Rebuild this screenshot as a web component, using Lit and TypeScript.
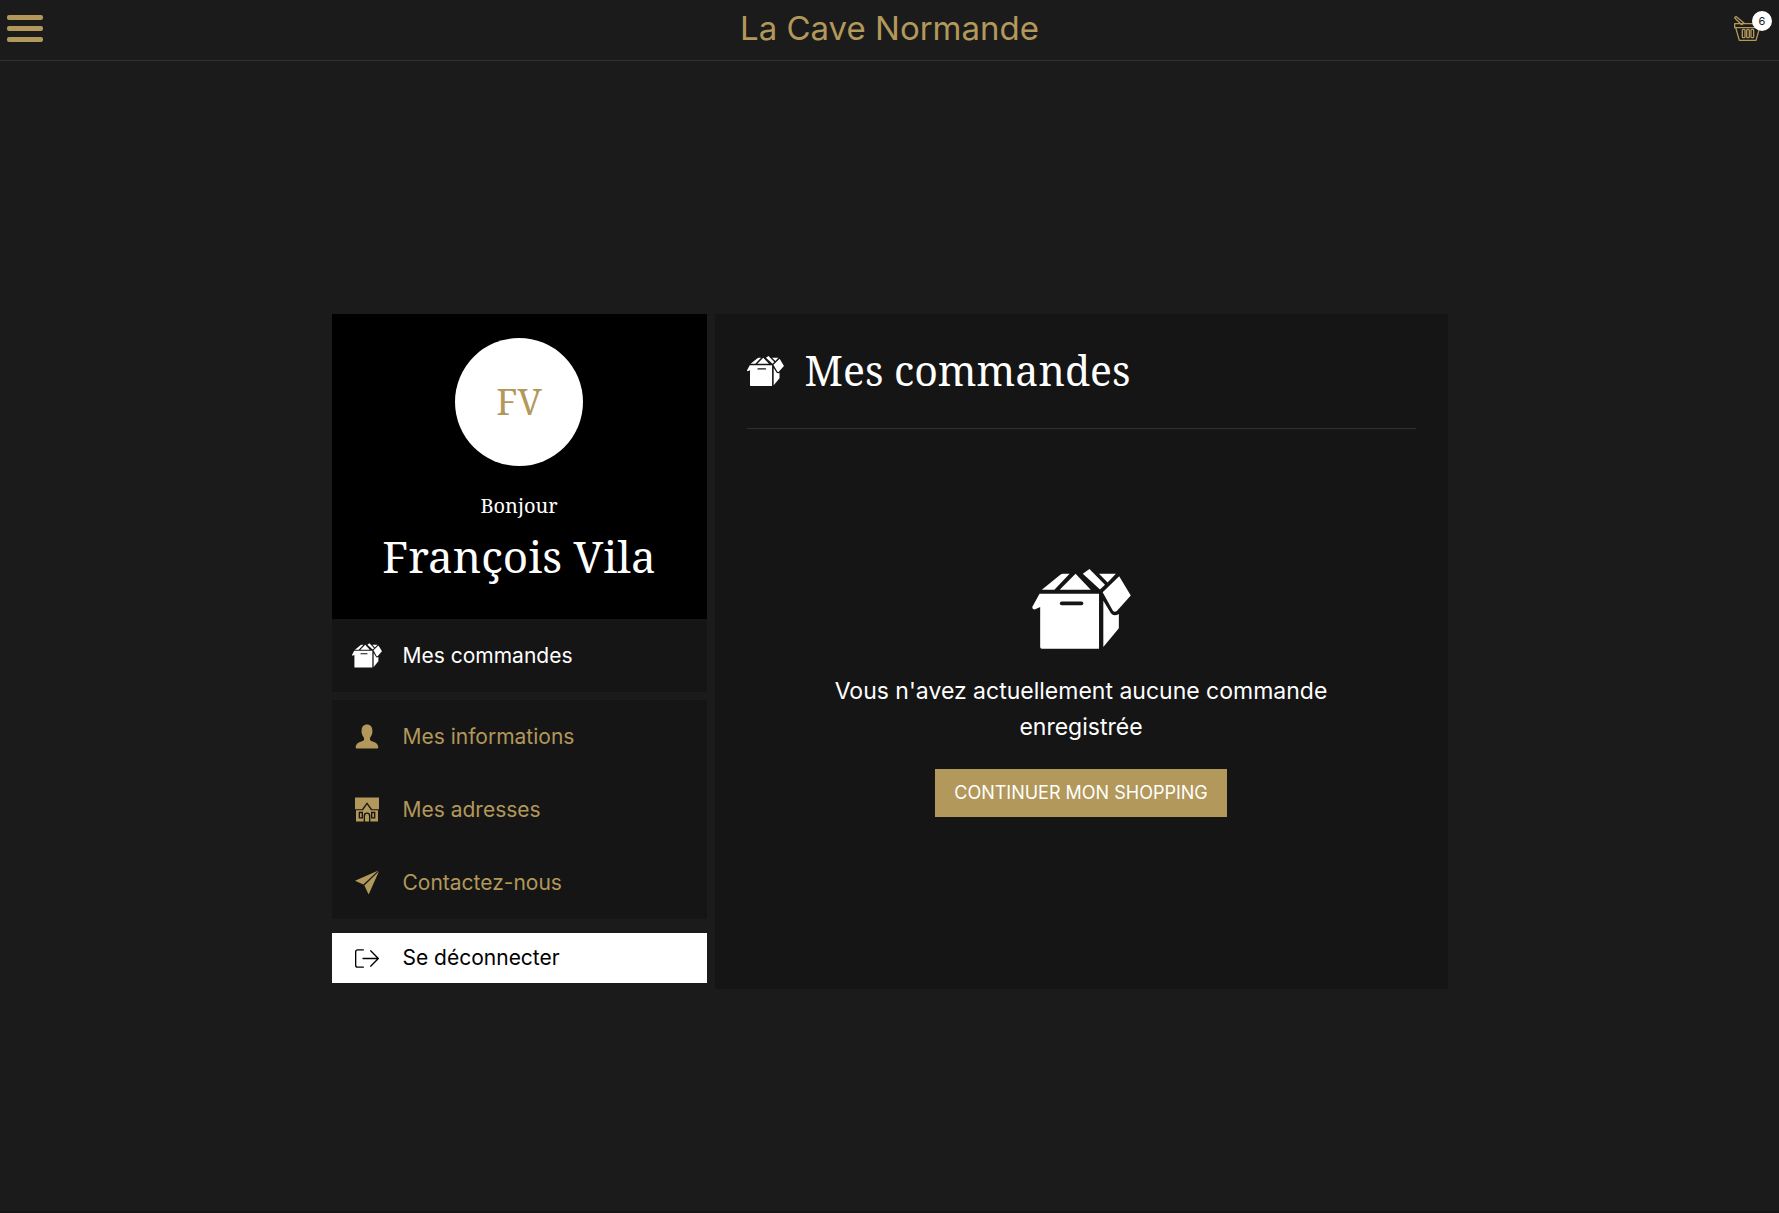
import { LitElement, html, css, TemplateResult } from "lit";
import { customElement } from "lit/decorators.js";

const boxIcon = html`<svg class="box" viewBox="66 56 298 242" aria-hidden="true">
  <g fill="currentColor">
    <path d="M95 119L150 74Q154 70 160 70H179L133 119Z" />
    <path d="M149 119L197 70L243 119Z" />
    <path d="M219 70L239 56L286 104L271 118Z" />
    <path d="M268 70H319L294 97Z" />
    <path d="M329 78L364 136L322 183Q315 188 310 182L279 126Z" />
    <path d="M88 131H268V297H95Q90 297 90 292V171L75 178Q66 180 66 171Z" />
    <path d="M281 152L304 190Q313 201 328 192V235L281 292Z" />
  </g>
  <path class="slot" d="M155 160H215" />
</svg>`;

const personIcon = html`<svg class="glyph" viewBox="0 0 72 74" aria-hidden="true">
  <path fill="currentColor" d="M36 1C46 1 52 8 52 18C52 21 53 22 52 26C51 30 50 34 47 38C44 42 44 48 47 50C53 53 70 55 70 70Q70 73 67 73H5Q2 73 2 70C2 55 19 53 25 50C28 48 28 42 25 38C22 34 21 30 20 26C19 22 20 21 20 18C20 8 26 1 36 1Z" />
</svg>`;

const houseIcon = html`<svg class="glyph" viewBox="0 0 72 74" aria-hidden="true">
  <path fill="currentColor" d="M0 1H72V36H51L36 15L21 36H0Z" />
  <path fill="currentColor" fill-rule="evenodd" d="M3 39H24L36 22L48 39H69V73H46V56Q46 46 36 46Q26 46 26 56V73H3ZM11 44V64H24V44ZM48 44V64H61V44Z" />
  <path fill="currentColor" d="M15 48H20V60H15ZM52 48H57V60H52ZM30 73V57Q30 50 36 50Q42 50 42 57V73Z" />
</svg>`;

const planeIcon = html`<svg class="glyph" viewBox="0 0 72 74" aria-hidden="true">
  <path fill="currentColor" d="M0 32L70 1L25 43Z" />
  <path fill="currentColor" d="M72 3L41 73L28 46Z" />
</svg>`;

const logoutIcon = html`<svg class="glyph" viewBox="0 0 72 74" aria-hidden="true">
  <g fill="none" stroke="currentColor" stroke-width="4" stroke-linecap="round" stroke-linejoin="round">
    <path d="M25 11H8Q2 11 2 17V57Q2 63 8 63H25" />
    <path d="M24 37H70M47 14L70 37L47 60" />
  </g>
</svg>`;

const basketIcon = html`<svg class="basket" viewBox="27 33 84 78" aria-hidden="true">
  <g fill="none" stroke="currentColor" stroke-width="4" stroke-linejoin="round">
    <path d="M29 56H109V68H29Z" />
    <path d="M32 68L43 106H93L104 68" />
    <path d="M30 40Q28 35 34 35L57 54L50 59Z" />
    <rect x="52" y="73" width="8" height="25" rx="3" />
    <rect x="65" y="73" width="8" height="25" rx="3" />
    <rect x="78" y="73" width="8" height="25" rx="3" />
  </g>
</svg>`;

interface Entry {
  label: string;
  icon: TemplateResult;
}

const accountEntries: Entry[] = [
  { label: "Mes informations", icon: personIcon },
  { label: "Mes adresses", icon: houseIcon },
  { label: "Contactez-nous", icon: planeIcon },
];

@customElement("app-root")
export class AppRoot extends LitElement {
  static styles = css`
    :host {
      --gold: #b2985a;
      --panel: #151515;
      --line: #303030;
      --serif: "Noto Serif", "Liberation Serif", serif;
      display: flex;
      flex-direction: column;
      min-height: 100vh;
      background: #1b1b1b;
      color: #fff;
      font-family: Inter, "Noto Sans", sans-serif;
      font-size: 21px;
      line-height: 24px;
    }
    * { box-sizing: border-box; }
    h1, h2, p { margin: 0; font-weight: 400; }
    a { color: inherit; text-decoration: none; }
    svg { display: block; flex: none; }

    .topbar {
      display: grid;
      grid-template-columns: 1fr auto 1fr;
      align-items: center;
      height: 61px;
      padding: 0 7px 4px;
      border-bottom: 1px solid var(--line);
      color: var(--gold);
    }
    .menu {
      display: flex;
      flex-direction: column;
      gap: 6px;
      width: 36px;
      padding: 0;
      border: 0;
      background: none;
      cursor: pointer;
    }
    .bar { height: 5px; border-radius: 2px; background: var(--gold); }
    .brand { font-size: 33px; line-height: 40px; }
    .cart {
      position: relative;
      justify-self: end;
      padding: 2px 10px 0 0;
    }
    .basket { width: 28px; height: 26px; }
    .count {
      position: absolute;
      top: -3px;
      right: 0;
      width: 20px;
      height: 20px;
      border-radius: 50%;
      background: #fff;
      color: #1b1b1b;
      font-size: 11px;
      line-height: 20px;
      text-align: center;
    }

    main {
      flex: 1;
      display: flex;
      align-items: center;
      justify-content: center;
      padding: 31px 16px 0;
    }
    .account {
      display: grid;
      grid-template-columns: 375fr 733fr;
      gap: 8px;
      width: 100%;
      max-width: 1116px;
    }

    .profile {
      display: flex;
      flex-direction: column;
      align-items: center;
      padding: 24px 16px 28px;
      background: #000;
      font-family: var(--serif);
      text-align: center;
    }
    .avatar {
      display: grid;
      place-items: center;
      width: 128px;
      height: 128px;
      margin-bottom: 24px;
      border-radius: 50%;
      background: #fff;
      color: var(--gold);
      font-size: 36px;
    }
    .hello { font-size: 20px; line-height: 32px; }
    .name { font-size: 44px; line-height: 69px; }

    .group { background: var(--panel); color: var(--gold); }
    .group + .group { margin-top: 8px; }
    .current { color: #fff; }
    .entry {
      display: flex;
      align-items: center;
      gap: 21px;
      width: 100%;
      height: 73px;
      padding: 0 20px;
    }
    .slotbox { display: grid; place-items: center; width: 30px; }
    .slotbox .box { width: 30px; height: 25px; }
    .glyph { width: 24px; height: 25px; }
    .slot { stroke: var(--panel); stroke-width: 11; stroke-linecap: round; }
    .logout {
      height: 50px;
      margin-top: 14px;
      border: 0;
      background: #fff;
      color: #000;
      font: inherit;
      cursor: pointer;
    }

    .orders {
      display: flex;
      flex-direction: column;
      padding: 0 32px;
      background: var(--panel);
    }
    .heading {
      display: flex;
      align-items: center;
      gap: 21px;
      height: 115px;
      border-bottom: 1px solid var(--line);
    }
    .heading .box { width: 37px; height: 30px; }
    .title { padding-bottom: 2px; font-family: var(--serif); font-size: 41px; line-height: 56px; }
    .empty {
      flex: 1;
      display: flex;
      flex-direction: column;
      align-items: center;
      padding: 140px 0 172px;
      text-align: center;
    }
    .empty .box { width: 99px; height: 80px; margin-bottom: 24px; }
    .message { max-width: 520px; font-size: 23px; line-height: 36px; }
    .shop {
      margin-top: 24px;
      padding: 0 19px;
      background: var(--gold);
      font-size: 18px;
      line-height: 48px;
    }
    .foot { height: 2px; background: #181517; }
  `;

  private entry(e: Entry) {
    return html`<a class="entry" href="#"><span class="slotbox">${e.icon}</span>${e.label}</a>`;
  }

  render() {
    return html`
      <header class="topbar">
        <button class="menu" aria-label="Menu">
          <span class="bar"></span><span class="bar"></span><span class="bar"></span>
        </button>
        <a class="brand" href="#">La Cave Normande</a>
        <a class="cart" href="#" aria-label="Panier">${basketIcon}<span class="count">6</span></a>
      </header>
      <main>
        <div class="account">
          <aside>
            <div class="profile">
              <div class="avatar">FV</div>
              <p class="hello">Bonjour</p>
              <h2 class="name">François Vila</h2>
            </div>
            <nav>
              <div class="group current">${this.entry({ label: "Mes commandes", icon: boxIcon })}</div>
              <div class="group">${accountEntries.map((e) => this.entry(e))}</div>
            </nav>
            <button class="entry logout"><span class="slotbox">${logoutIcon}</span>Se déconnecter</button>
          </aside>
          <section class="orders">
            <div class="heading">${boxIcon}<h1 class="title">Mes commandes</h1></div>
            <div class="empty">
              ${boxIcon}
              <p class="message">Vous n'avez actuellement aucune commande enregistrée</p>
              <a class="shop" href="#">CONTINUER MON SHOPPING</a>
            </div>
          </section>
        </div>
      </main>
      <footer class="foot"></footer>
    `;
  }
}
